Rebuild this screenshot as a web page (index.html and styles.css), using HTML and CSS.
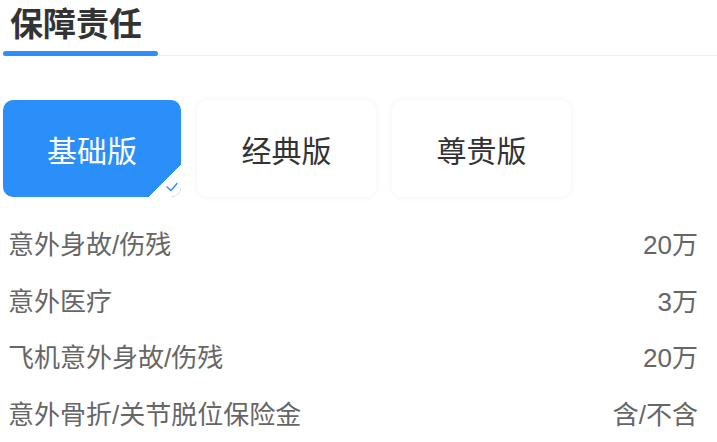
FILE: index.html
```html
<!DOCTYPE html>
<html lang="zh-CN">
<head>
    <meta charset="UTF-8">
    <meta name="viewport" content="width=device-width, initial-scale=1.0">
    <title>保障责任</title>
    <link rel="stylesheet" href="styles.css">
</head>
<body>

<div class="section-head">
    <h2 class="section-title">保障责任</h2>
</div>

<div class="plans">
    <div class="plan active">
        基础版
        <span class="corner">
            <svg viewBox="0 0 12 10" width="12" height="10"><path d="M1 5 L5 8.5 L11 1.5" fill="none" stroke="#2b8ff9" stroke-width="1.4" stroke-linecap="round" stroke-linejoin="round"/></svg>
        </span>
    </div>
    <div class="plan">经典版</div>
    <div class="plan">尊贵版</div>
</div>

<ul class="items">
    <li><span>意外身故/伤残</span><span>20万</span></li>
    <li><span>意外医疗</span><span>3万</span></li>
    <li><span>飞机意外身故/伤残</span><span>20万</span></li>
    <li><span>意外骨折/关节脱位保险金</span><span>含/不含</span></li>
</ul>

</body>
</html>
```

FILE: styles.css
```css
* { margin: 0; padding: 0; box-sizing: border-box; }
body {
    font-family: 'Liberation Sans', 'Noto Sans CJK SC', sans-serif;
    background: #fff; color: #333; padding: 0 19px 0 3px;
}
.section-head { border-bottom: 1px solid #f0f0f0; margin-right: -19px; }
.section-title {
    display: inline-block; font-size: 33px; font-weight: bold; color: #333;
    line-height: 40px; padding: 5px 16px 0 7px; position: relative;
    height: 55px;
}
.section-title::after {
    content: ''; position: absolute; left: 0; right: 0; bottom: -1px;
    height: 5px; border-radius: 3px; background: #2b8ff9;
}
.plans { display: flex; gap: 16px; margin-top: 44px; }
.plan {
    width: 179px; height: 97px; border-radius: 10px; background: #fff;
    box-shadow: 0 0 6px rgba(0, 0, 0, 0.06);
    display: flex; align-items: center; justify-content: center;
    font-size: 30px; color: #333; position: relative; overflow: hidden;
}
.plan.active { width: 178px; background: #2b8ff9; color: #fff; box-shadow: none; }
.corner {
    position: absolute; right: 0; bottom: 0; width: 32px; height: 32px;
    background: linear-gradient(135deg, transparent 50%, #fff 50%);
}
.corner svg { position: absolute; right: 3px; bottom: 5px; }
.items { list-style: none; margin-top: 17px; padding-left: 5px; }
.items li {
    display: flex; justify-content: space-between; align-items: center;
    font-size: 26px; color: #666; height: 56.7px;
}
```
